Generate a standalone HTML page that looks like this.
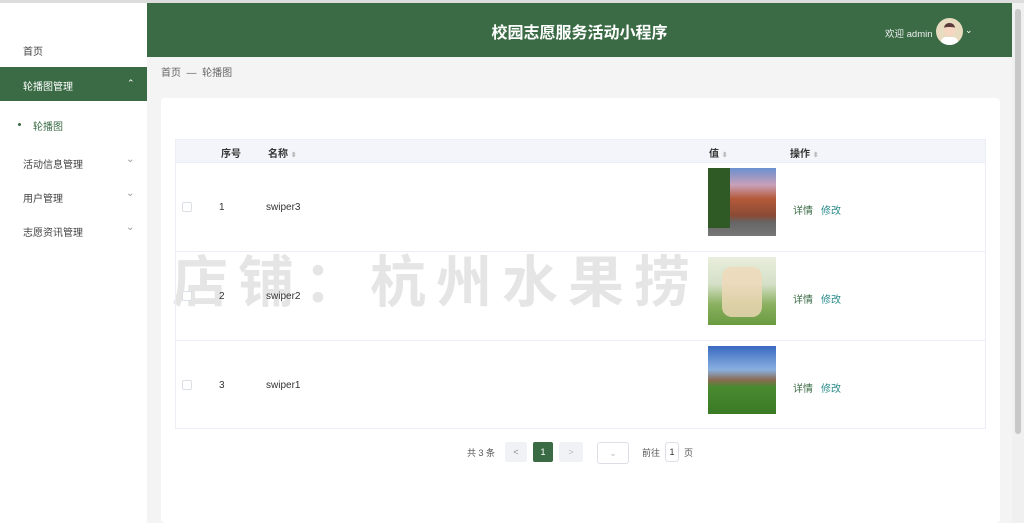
<!DOCTYPE html><html><head><meta charset="utf-8"><style>
*{margin:0;padding:0;box-sizing:border-box}
body{width:1024px;height:523px;overflow:hidden;background:#f4f4f4;font-family:"Liberation Sans","Noto Sans CJK SC",sans-serif;font-size:10px;color:#333;position:relative}
.top{position:absolute;left:0;top:0;width:1024px;height:3px;background:#ddd}
.side{position:absolute;left:0;top:3px;width:147px;height:520px;background:#fff}
.si{position:absolute;left:23px;font-size:10px;color:#444}
.hdr{position:absolute;left:147px;top:3px;width:865px;height:54px;background:#3a6b45;color:#fff}
.sb{position:absolute;left:1012px;top:3px;width:12px;height:520px;background:#f0f0f0}
.sb div{position:absolute;left:3px;top:6px;width:6px;height:425px;background:#c8c8c8;border-radius:3px}
.card{position:absolute;left:161px;top:98px;width:839px;height:425px;background:#fff;border-radius:4px}
.tbl{position:absolute;left:175px;top:139px;width:811px;height:290px;border:1px solid #ebeef5}
.th{position:absolute;left:0;top:0;width:100%;height:23px;background:#f3f5fa;border-bottom:1px solid #ebeef5;font-weight:bold;font-size:10px;color:#333}
.row{position:absolute;left:0;width:100%;height:89px;border-bottom:1px solid #ebeef5}
.c{position:absolute}
.cb{width:10px;height:10px;border:1px solid #dcdfe6;border-radius:2px;background:#fff}
.arr{color:#bbb;font-size:7px}
.img{position:absolute;left:532px;top:5px;width:68px;height:68px}
</style></head><body>
<div class="top"></div>
<div class="side">
<div class="si" style="top:40px">首页</div>
<div style="position:absolute;left:0;top:64px;width:147px;height:34px;background:#3a6b45"></div>
<div class="si" style="top:75px;color:#fff">轮播图管理</div><div style="position:absolute;left:127px;top:75px;color:#fff;font-size:9px">⌃</div>
<div style="position:absolute;left:18px;top:120px;width:3px;height:3px;border-radius:50%;background:#3a6b45"></div>
<div class="si" style="top:115px;left:33px;color:#3a6b45">轮播图</div>
<div class="si" style="top:153px">活动信息管理</div><div class="si" style="left:126px;top:151px;color:#999">⌄</div>
<div class="si" style="top:187px">用户管理</div><div class="si" style="left:126px;top:185px;color:#999">⌄</div>
<div class="si" style="top:221px">志愿资讯管理</div><div class="si" style="left:126px;top:219px;color:#999">⌄</div>
</div>
<div class="hdr">
<div style="position:absolute;left:0;width:865px;top:16px;text-align:center;font-size:16px;font-weight:bold">校园志愿服务活动小程序</div>
<div style="position:absolute;left:738px;top:23px;font-size:9.5px;color:#eee">欢迎 admin</div>
<div style="position:absolute;left:789px;top:15px;width:27px;height:27px;border-radius:50%;background:#e8dcc0;overflow:hidden"><div style="position:absolute;left:8px;top:5px;width:11px;height:13px;border-radius:5px;background:#f5d6c0;border-top:4px solid #5a3a3a"></div><div style="position:absolute;left:5px;top:19px;width:17px;height:10px;background:#fff;border-radius:5px 5px 0 0"></div></div>
<div style="position:absolute;left:818px;top:22px;font-size:9px">⌄</div>
</div>
<div class="sb"><div></div></div>
<div style="position:absolute;left:161px;top:64px;font-size:10px;color:#666">首页 &nbsp;—&nbsp; 轮播图</div>
<div class="card"></div>
<div style="position:absolute;left:172px;top:238px;font-size:56px;font-weight:bold;color:rgba(0,0,0,0.1);letter-spacing:10px">店铺：杭州水果捞</div>
<div class="tbl">
<div class="th"><div class="c" style="left:45px;top:5px">序号</div><div class="c" style="left:92px;top:5px">名称 <span class="arr">⬍</span></div><div class="c" style="left:533px;top:5px">值 <span class="arr">⬍</span></div><div class="c" style="left:614px;top:5px">操作 <span class="arr">⬍</span></div></div>
<div class="row" style="top:23px"><div class="c cb" style="left:6px;top:39px"></div><div class="c" style="left:43px;top:39px">1</div><div class="c" style="left:90px;top:39px">swiper3</div>
<div class="img" style="background:linear-gradient(180deg,#6a8fd0 0%,#c9a0b8 25%,#b55a3a 45%,#8a4a35 70%,#666 80%,#777 100%)"><div style="position:absolute;left:0;top:0;width:22px;height:60px;background:#2f5a25"></div></div>
<div class="c" style="left:617px;top:39px;color:#3a6b45">详情</div><div class="c" style="left:645px;top:39px;color:#2a8a8a">修改</div></div>
<div class="row" style="top:112px"><div class="c cb" style="left:6px;top:39px"></div><div class="c" style="left:43px;top:39px">2</div><div class="c" style="left:90px;top:39px">swiper2</div>
<div class="img" style="background:linear-gradient(180deg,#e8eedc 0%,#d5e0c8 40%,#8ab060 70%,#6a9a40 100%)"><div style="position:absolute;left:14px;top:10px;width:40px;height:50px;background:#f0d8b8;border-radius:10px;opacity:.8"></div></div>
<div class="c" style="left:617px;top:39px;color:#3a6b45">详情</div><div class="c" style="left:645px;top:39px;color:#2a8a8a">修改</div></div>
<div class="row" style="top:201px;border-bottom:none"><div class="c cb" style="left:6px;top:39px"></div><div class="c" style="left:43px;top:39px">3</div><div class="c" style="left:90px;top:39px">swiper1</div>
<div class="img" style="background:linear-gradient(180deg,#3a6ac0 0%,#8ab0e0 35%,#8a6a50 50%,#4a8a30 60%,#3a7a25 100%)"></div>
<div class="c" style="left:617px;top:39px;color:#3a6b45">详情</div><div class="c" style="left:645px;top:39px;color:#2a8a8a">修改</div></div>
</div>
<div style="position:absolute;left:467px;top:446px;font-size:9px;color:#555">共 3 条</div>
<div style="position:absolute;left:505px;top:442px;width:22px;height:20px;background:#f0f2f5;border-radius:2px;text-align:center;line-height:20px;color:#888;font-size:9px">&lt;</div>
<div style="position:absolute;left:533px;top:442px;width:20px;height:20px;background:#3a6b45;border-radius:2px;text-align:center;line-height:20px;color:#fff;font-size:9px">1</div>
<div style="position:absolute;left:559px;top:442px;width:24px;height:20px;background:#f0f2f5;border-radius:2px;text-align:center;line-height:20px;color:#bbb;font-size:9px">&gt;</div>
<div style="position:absolute;left:597px;top:442px;width:32px;height:22px;border:1px solid #dcdfe6;border-radius:3px;text-align:center;line-height:20px;color:#bbb;font-size:9px">⌄</div>
<div style="position:absolute;left:642px;top:446px;font-size:9px;color:#555">前往</div>
<div style="position:absolute;left:665px;top:442px;width:14px;height:20px;border:1px solid #dcdfe6;border-radius:3px;text-align:center;line-height:18px;font-size:9px">1</div>
<div style="position:absolute;left:684px;top:446px;font-size:9px;color:#555">页</div>
</body></html>
